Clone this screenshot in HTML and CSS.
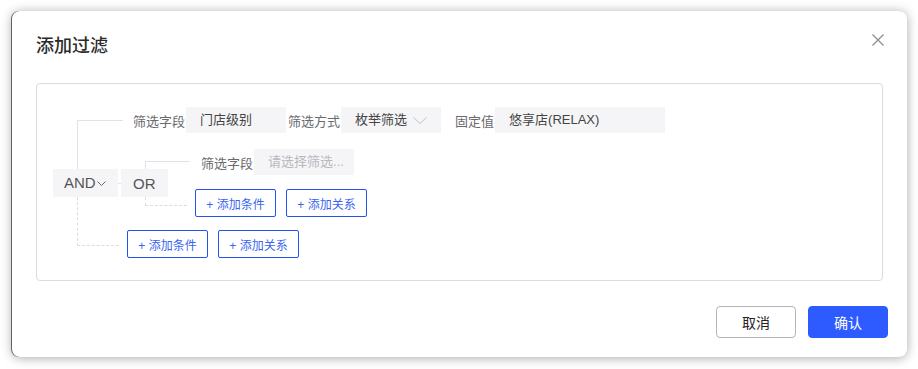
FILE: index.html
```html
<!DOCTYPE html>
<html lang="zh-CN">

<head>
    <meta charset="UTF-8">
    <meta name="viewport" content="width=device-width, initial-scale=1.0">
    <title>添加过滤</title>
    <link rel="stylesheet" href="styles.css">
</head>

<body>
    <div class="dialog">
        <div class="dialog-header">
            <h2 class="dialog-title">添加过滤</h2>
            <button class="dialog-close" aria-label="关闭">
                <svg viewBox="0 0 12 12" width="12" height="12">
                    <path d="M0.5 0.5 L11.5 11.5 M11.5 0.5 L0.5 11.5" stroke="#8a8a90" stroke-width="1.2" fill="none" />
                </svg>
            </button>
        </div>

        <div class="dialog-body">
            <div class="filter-box">
                <!-- root relation -->
                <div class="group group-and">
                    <div class="rel rel-and">
                        AND<svg class="rel-arrow" viewBox="0 0 9 5" width="9" height="5">
                            <path d="M0.5 0.5 L4.5 4.5 L8.5 0.5" stroke="#666" stroke-width="1" fill="none" />
                        </svg>
                    </div>
                    <div class="group-children">
                        <div class="cond cond-root">
                            <span class="cond-label">筛选字段</span>
                            <div class="field">门店级别</div>
                            <span class="cond-label">筛选方式</span>
                            <div class="field field-select">
                                枚举筛选
                                <svg class="select-arrow" viewBox="0 0 14 7" width="14" height="7">
                                    <path d="M0.5 0.5 L7 6.5 L13.5 0.5" stroke="#c4c4ca" stroke-width="1" fill="none" />
                                </svg>
                            </div>
                            <span class="cond-label">固定值</span>
                            <div class="field field-wide">悠享店(RELAX)</div>
                        </div>

                        <!-- nested relation -->
                        <div class="group group-or">
                            <div class="rel rel-or">OR</div>
                            <div class="group-children">
                                <div class="cond cond-nested">
                                    <span class="cond-label">筛选字段</span>
                                    <div class="field field-empty">请选择筛选...</div>
                                </div>
                                <div class="actions actions-nested">
                                    <button class="btn-line">+ 添加条件</button>
                                    <button class="btn-line">+ 添加关系</button>
                                </div>
                            </div>
                        </div>

                        <div class="actions actions-root">
                            <button class="btn-line">+ 添加条件</button>
                            <button class="btn-line">+ 添加关系</button>
                        </div>
                    </div>
                </div>
            </div>
        </div>

        <div class="dialog-footer">
            <button class="btn btn-cancel">取消</button>
            <button class="btn btn-primary">确认</button>
        </div>
    </div>
</body>

</html>
```

FILE: styles.css
```css
* {
    margin: 0;
    padding: 0;
    box-sizing: border-box;
}

html,
body {
    height: 100%;
    overflow: hidden;
}

body {
    background: #fff;
    padding: 11px 0 0 12px;
    font-family: "Liberation Sans", "Noto Sans CJK SC", sans-serif;
    color: #333;
}

button {
    font-family: inherit;
    cursor: pointer;
}

.dialog {
    position: relative;
    width: 895px;
    background: #fff;
    border-radius: 8px;
    box-shadow: 0 1px 11px rgba(0, 0, 0, 0.34), -1px 0 0 rgba(0, 0, 0, 0.55);
}

.dialog-header {
    padding: 22px 24px 0;
}

.dialog-title {
    font-size: 18px;
    line-height: 26px;
    font-weight: 500;
    color: #2b2b2b;
}

.dialog-close {
    position: absolute;
    top: 23px;
    right: 23px;
    width: 12px;
    height: 12px;
    border: none;
    background: none;
    display: flex;
}

.dialog-body {
    padding: 24px 24px 0;
}

.filter-box {
    border: 1px solid #dcdce0;
    border-radius: 4px;
    padding: 23px 16px 22px;
}

/* tree */
.group {
    display: flex;
    align-items: center;
}

.group-children {
    display: flex;
    flex-direction: column;
    align-items: flex-start;
}

.group-and > .group-children {
    margin-left: 3px;
}

.rel {
    position: relative;
    height: 28px;
    background: #f5f5f7;
    display: flex;
    align-items: center;
    font-size: 15px;
    color: #555;
}

.rel::before,
.rel::after {
    content: '';
    position: absolute;
    left: 24px;
}

.rel::before {
    bottom: 100%;
    border-left: 1px solid #e2e2e6;
    border-top: 1px solid #e2e2e6;
}

.rel::after {
    top: 100%;
    border-left: 1px dashed #dcdce0;
    border-bottom: 1px dashed #dcdce0;
}

.rel-and {
    width: 65px;
    padding-left: 11px;
}

.rel-and::before {
    width: 45px;
    height: 48px;
}

.rel-and::after {
    width: 41px;
    height: 48px;
}

.rel-arrow {
    margin-left: 1px;
    margin-top: 2px;
}

.rel-or {
    width: 47px;
    padding-left: 12px;
}

.rel-or::before {
    width: 44px;
    height: 7px;
}

.rel-or::after {
    width: 41px;
    height: 8px;
}

.group-or {
    position: relative;
    margin-bottom: 13px;
}

.group-or::before {
    content: '';
    position: absolute;
    left: -3px;
    top: 50%;
    width: 3px;
    border-top: 1px solid #e2e2e6;
}

/* condition row */
.cond {
    display: flex;
    align-items: center;
    height: 26px;
}

.cond-root {
    margin-left: 12px;
    margin-bottom: 16px;
}

.cond-nested {
    margin-left: 33px;
    margin-bottom: 14px;
}

.cond-label {
    font-size: 13px;
    color: #6a6a6e;
    margin-right: 1px;
}

.field {
    width: 100px;
    height: 26px;
    line-height: 26px;
    padding: 0 14px;
    background: #f5f5f7;
    font-size: 13px;
    color: #444;
    margin-right: 2px;
    white-space: nowrap;
}

.field-select {
    display: flex;
    align-items: center;
    margin-right: 14px;
}

.select-arrow {
    margin-left: auto;
}

.field-wide {
    width: 170px;
}

.field-empty {
    color: #b8b8be;
}

/* add buttons */
.actions {
    display: flex;
    gap: 10px;
}

.actions-nested {
    margin-left: 27px;
}

.actions-root {
    margin-left: 6px;
}

.btn-line {
    width: 81px;
    height: 28px;
    border: 1px solid #2452ef;
    border-radius: 2px;
    background: #fff;
    color: #3a64ef;
    font-size: 12px;
}

/* footer */
.dialog-footer {
    display: flex;
    justify-content: flex-end;
    gap: 12px;
    padding: 25px 19px 19px;
}

.btn {
    width: 80px;
    height: 32px;
    border-radius: 4px;
    font-size: 14px;
}

.btn-cancel {
    background: #fff;
    border: 1px solid #b4b4bc;
    color: #222;
}

.btn-primary {
    background: #2e5bff;
    border: 1px solid #2e5bff;
    color: #fff;
}
```
